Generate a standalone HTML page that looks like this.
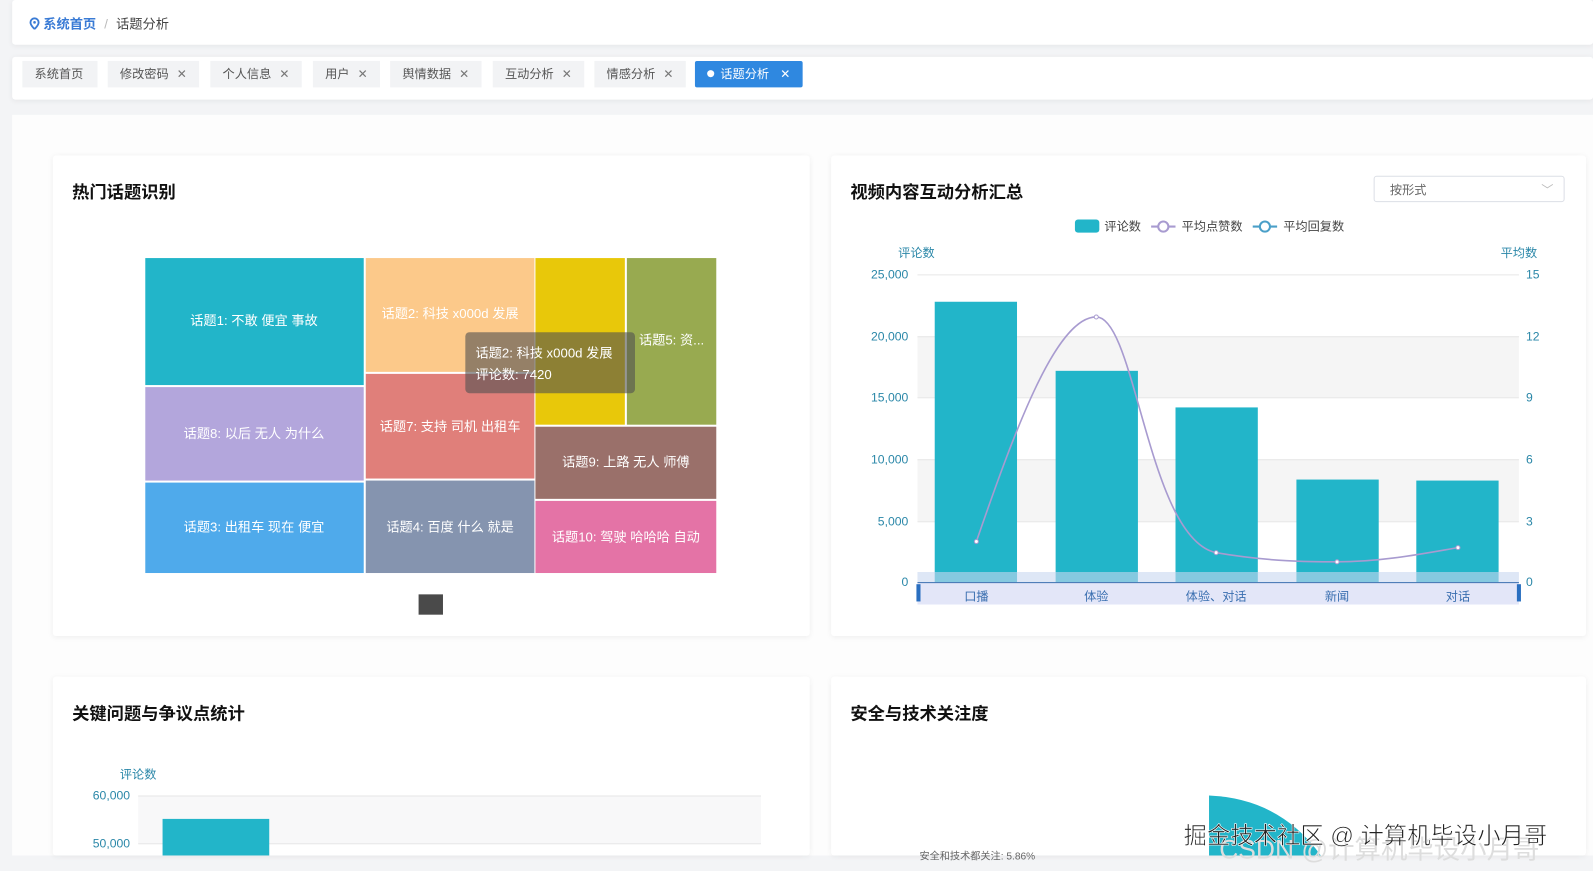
<!DOCTYPE html>
<html><head><meta charset="utf-8"><style>
html,body{margin:0;padding:0;width:1593px;height:871px;overflow:hidden;background:#f3f4f6;font-family:"Liberation Sans","Noto Sans CJK SC",sans-serif}
#w{position:absolute;left:0;top:0;width:1568px;height:857px;transform:scale(1.016);transform-origin:0 0}
.abs{position:absolute}
.card{position:absolute;background:#fff;box-shadow:0 1px 6px rgba(0,0,0,.06);border-radius:3px}
.tab{position:absolute;top:60px;height:26px;line-height:26px;background:#f2f3f5;color:#555;font-size:12px;padding-left:12px;box-sizing:border-box}
.tab b{font-weight:normal;color:#777;position:absolute;right:12px}
.title{position:absolute;font-size:17px;font-weight:bold;color:#111}
</style></head><body><div id="w">
<div class="card" style="left:12px;top:0;width:1556px;height:44px"></div>
<div class="abs" style="left:29px;top:13px;font-size:13px;">
<svg width="10" height="12" style="vertical-align:-1px"><path d="M5 1a4 4 0 0 1 4 4c0 3-4 6.5-4 6.5S1 8 1 5a4 4 0 0 1 4-4z" fill="none" stroke="#3a7bd5" stroke-width="1.8"/><circle cx="5" cy="5" r="1.3" fill="#3a7bd5"/></svg>
<span style="color:#3a7bd5;font-weight:bold">系统首页</span><span style="color:#bbb;margin:0 8px">/</span><span style="color:#444">话题分析</span></div>
<div class="card" style="left:12px;top:56px;width:1556px;height:42px"></div>
<div class="tab" style="left:22px;width:74px">系统首页</div>
<div class="tab" style="left:106px;width:90px">修改密码<b>✕</b></div>
<div class="tab" style="left:207px;width:90px">个人信息<b>✕</b></div>
<div class="tab" style="left:308px;width:66px">用户<b>✕</b></div>
<div class="tab" style="left:384px;width:90px">舆情数据<b>✕</b></div>
<div class="tab" style="left:485px;width:90px">互动分析<b>✕</b></div>
<div class="tab" style="left:585px;width:90px">情感分析<b>✕</b></div>
<div class="tab" style="left:684px;width:106px;background:#2f88e0;color:#fff;border-radius:2px"><span style="display:inline-block;width:7px;height:7px;border-radius:50%;background:#fff;margin-right:6px;vertical-align:1px"></span>话题分析<b style="color:#fff">✕</b></div>
<div class="abs" style="left:12px;top:113px;width:1556px;height:729px;background:#fdfdfd"></div>
<div class="card" style="left:52px;top:153px;width:745px;height:473px"></div>
<div class="card" style="left:818px;top:153px;width:743px;height:473px"></div>
<div class="card" style="left:52px;top:666px;width:745px;height:176px"></div>
<div class="card" style="left:818px;top:666px;width:743px;height:176px"></div>
<div class="title" style="left:71px;top:175px">热门话题识别</div>
<div class="title" style="left:837px;top:175px">视频内容互动分析汇总</div>
<div class="title" style="left:71px;top:688px">关键问题与争议点统计</div>
<div class="title" style="left:837px;top:688px">安全与技术关注度</div>
<div class="abs" style="left:1352px;top:173px;width:188px;height:26px;border:1px solid #dcdfe6;border-radius:3px;font-size:12px;color:#666;line-height:26px;box-sizing:border-box;padding-left:15px">按形式<span style="position:absolute;right:10px;color:#bbb">﹀</span></div>
<svg class="abs" style="left:0;top:0" width="1568" height="857" font-family="Liberation Sans,Noto Sans CJK SC,sans-serif">
<g font-size="13" fill="#fff" text-anchor="middle">
<rect x="143" y="254" width="215" height="125" fill="#22b5c9"/><text x="250" y="320">话题1: 不敢 便宜 事故</text>
<rect x="143" y="381" width="215" height="92" fill="#b3a6dc"/><text x="250" y="431">话题8: 以后 无人 为什么</text>
<rect x="143" y="475" width="215" height="89" fill="#4faaeb"/><text x="250" y="523">话题3: 出租车 现在 便宜</text>
<rect x="360" y="254" width="166" height="112" fill="#fcc98a"/><text x="443" y="313">话题2: 科技 x000d 发展</text>
<rect x="360" y="368" width="166" height="103" fill="#e07f7a"/><text x="443" y="424">话题7: 支持 司机 出租车</text>
<rect x="360" y="473" width="166" height="91" fill="#8594af"/><text x="443" y="523">话题4: 百度 什么 就是</text>
<rect x="527" y="254" width="88" height="164" fill="#e8c80a"/>
<rect x="617" y="254" width="88" height="164" fill="#98aa50"/><text x="661" y="339">话题5: 资...</text>
<rect x="527" y="420" width="178" height="71" fill="#9a706a"/><text x="616" y="459">话题9: 上路 无人 师傅</text>
<rect x="527" y="493" width="178" height="71" fill="#e473a6"/><text x="616" y="533">话题10: 驾驶 哈哈哈 自动</text>
</g>
<rect x="458" y="327" width="167" height="60" rx="4" fill="rgba(80,80,80,.6)"/>
<text x="468" y="352" font-size="13" fill="#fff">话题2: 科技 x000d 发展</text>
<text x="468" y="373" font-size="13" fill="#fff">评论数: 7420</text>
<rect x="412" y="585" width="24" height="20" fill="#4a4a4a"/>
<rect x="1058" y="216" width="24" height="13" rx="3" fill="#22b5c9"/><text x="1087" y="227" font-size="12" fill="#444">评论数</text>
<line x1="1133" y1="223" x2="1157" y2="223" stroke="#a89bd0" stroke-width="2"/><circle cx="1145" cy="223" r="5" fill="#fff" stroke="#a89bd0" stroke-width="2"/><text x="1163" y="227" font-size="12" fill="#444">平均点赞数</text>
<line x1="1233" y1="223" x2="1257" y2="223" stroke="#4a9fc8" stroke-width="2"/><circle cx="1245" cy="223" r="5" fill="#fff" stroke="#4a9fc8" stroke-width="2"/><text x="1263" y="227" font-size="12" fill="#444">平均回复数</text>
<g font-size="12" fill="#2a87a8">
<text x="884" y="253">评论数</text><text x="1477" y="253">平均数</text>
<g text-anchor="end"><text x="894" y="274">25,000</text><text x="894" y="335">20,000</text><text x="894" y="395">15,000</text><text x="894" y="456">10,000</text><text x="894" y="517">5,000</text><text x="894" y="577">0</text></g>
<text x="1502" y="274">15</text><text x="1502" y="335">12</text><text x="1502" y="395">9</text><text x="1502" y="456">6</text><text x="1502" y="517">3</text><text x="1502" y="577">0</text>
</g>
<rect x="903" y="331" width="592" height="60" fill="#f5f5f5"/><rect x="903" y="452" width="592" height="61" fill="#f5f5f5"/>
<g stroke="#e6e6e6"><line x1="903" y1="270.5" x2="1495" y2="270.5"/><line x1="903" y1="331.5" x2="1495" y2="331.5"/><line x1="903" y1="391.5" x2="1495" y2="391.5"/><line x1="903" y1="452.5" x2="1495" y2="452.5"/><line x1="903" y1="513.5" x2="1495" y2="513.5"/></g>
<g fill="#22b5c9"><rect x="920" y="297" width="81" height="276"/><rect x="1039" y="365" width="81" height="208"/><rect x="1157" y="401" width="81" height="172"/><rect x="1276" y="472" width="81" height="101"/><rect x="1394" y="473" width="81" height="100"/></g>
<path d="M961,533 C1000,420 1040,312 1079,312 C1118,312 1130,530 1197,544 C1250,553 1290,553 1316,553 C1360,553 1400,545 1435,539" fill="none" stroke="#a89bd0" stroke-width="1.6"/>
<g fill="#fff" stroke="#a89bd0"><circle cx="961" cy="533" r="2"/><circle cx="1079" cy="312" r="2"/><circle cx="1197" cy="544" r="2"/><circle cx="1316" cy="553" r="2"/><circle cx="1435" cy="539" r="2"/></g>
<rect x="903" y="563" width="592" height="10" fill="rgba(200,215,240,.6)"/>
<rect x="903" y="573" width="592" height="22" fill="rgba(215,220,245,.7)"/>
<line x1="903" y1="573.5" x2="1495" y2="573.5" stroke="#3a6fb0"/>
<rect x="902" y="575" width="4" height="17" fill="#2a6fc0"/><rect x="1493" y="575" width="4" height="17" fill="#2a6fc0"/>
<g font-size="12" fill="#3a6fb0" text-anchor="middle"><text x="961" y="591">口播</text><text x="1079" y="591">体验</text><text x="1197" y="591">体验、对话</text><text x="1316" y="591">新闻</text><text x="1435" y="591">对话</text></g>
<g font-size="12" fill="#2a87a8"><text x="118" y="766">评论数</text><text x="128" y="787" text-anchor="end">60,000</text><text x="128" y="834" text-anchor="end">50,000</text></g>
<rect x="136" y="783" width="613" height="47" fill="#f8f8f9"/>
<line x1="136" y1="783.5" x2="749" y2="783.5" stroke="#e6e6e6"/><line x1="136" y1="830.5" x2="749" y2="830.5" stroke="#e6e6e6"/>
<rect x="160" y="806" width="105" height="36" fill="#22b5c9"/>
<path d="M1190,842 L1190,783 Q1260,786 1300,842 Z" fill="#22b5c9"/>
<text x="905" y="846" font-size="10" fill="#666">安全和技术都关注: 5.86%</text>
<text x="1200" y="845" font-size="26" fill="#ddd">CSDN @计算机毕设小月哥</text>
<text x="1165" y="830" font-size="23" fill="#222" stroke="#fff" stroke-width="0.6">掘金技术社区 @ 计算机毕设小月哥</text>
</svg>
</div></body></html>
